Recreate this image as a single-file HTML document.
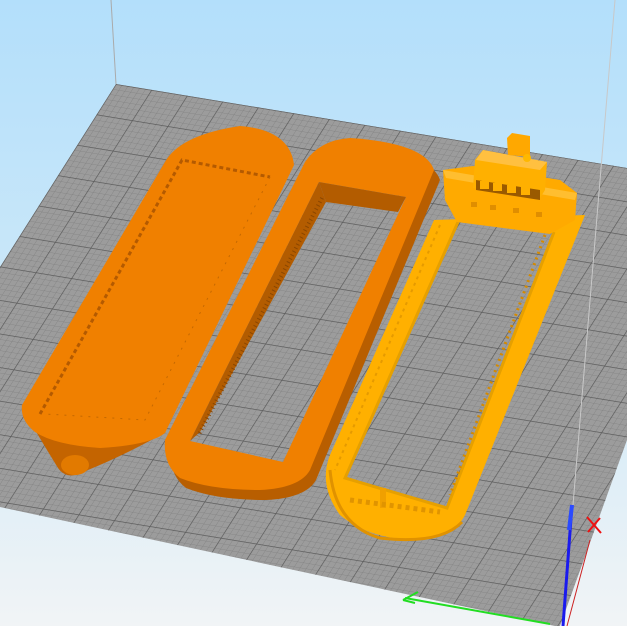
<!DOCTYPE html>
<html><head><meta charset="utf-8"><style>
html,body{margin:0;padding:0;width:627px;height:626px;overflow:hidden}
svg{display:block}
</style></head><body>
<svg width="627" height="626" viewBox="0 0 627 626" xmlns="http://www.w3.org/2000/svg">
<defs>
<linearGradient id="bg" x1="0" y1="0" x2="0" y2="1">
<stop offset="0" stop-color="#b3dffb"/><stop offset="0.55" stop-color="#cfe9f8"/><stop offset="1" stop-color="#f1f4f6"/>
</linearGradient>
<pattern id="minor" width="6" height="6" patternUnits="userSpaceOnUse" patternTransform="matrix(0.987 0.162 -0.535 0.845 116 84)">
<rect width="6" height="6" fill="#9c9c9c"/>
<path d="M0 0H6M0 0V6" stroke="#7e7e7e" stroke-width="0.7" fill="none"/>
</pattern>
<pattern id="major" width="36" height="36" patternUnits="userSpaceOnUse" patternTransform="matrix(0.987 0.162 -0.535 0.845 116 84)">
<path d="M0 0H36M0 0V36" stroke="#5a5a5a" stroke-width="1.4" fill="none"/>
</pattern>
</defs>
<rect width="627" height="626" fill="url(#bg)"/>
<line x1="111" y1="0" x2="116" y2="84" stroke="#aaa" stroke-width="1"/>
<polygon points="116,84 627,168 627,440 560,626 555,626 0,507 0,267" fill="url(#minor)"/>
<polygon points="116,84 627,168 627,440 560,626 555,626 0,507 0,267" fill="url(#major)"/>
<line x1="615" y1="0" x2="573" y2="505" stroke="#c8c8c8" stroke-width="1"/>

<!-- hull 1 -->
<path d="M35,430 Q50,455 58,468 Q68,482 88,470 Q125,455 166,432 Z" fill="#c46400"/>
<ellipse cx="75" cy="465" rx="14" ry="10" fill="#e27a00"/>
<path d="M22,405 L165,162 Q180,135 240,126 Q290,130 294,165 L165,433 Q150,445 100,448 Q55,445 35,432 Q20,420 22,405 Z" fill="#f08000"/>
<path d="M40,414 L182,160 L270,177" stroke="#b45a00" stroke-width="3" fill="none" stroke-dasharray="4 3"/>
<path d="M270,177 L145,420 L45,414" stroke="#c46800" stroke-width="1" fill="none" stroke-dasharray="2 6"/>

<!-- hull 2 -->
<path d="M171,450 L311,172 Q326,150 356,148 Q431,153 440,180 L316,480 Q306,498 266,500 Q216,500 186,488 Q169,475 171,450 Z" fill="#b85e00"/>
<path d="M165,440 L305,162 Q320,140 350,138 Q425,143 434,170 L310,470 Q300,488 260,490 Q210,490 180,478 Q163,465 165,440 Z" fill="#f08000"/>
<polygon points="190,441 319,182 406,197 283,462" fill="url(#minor)"/>
<polygon points="190,441 319,182 406,197 283,462" fill="url(#major)"/>
<polygon points="319,182 406,197 398,212 326,202" fill="#b35c00"/>
<polygon points="319,182 326,202 200,432 190,441" fill="#b35c00"/>
<path d="M322,198 L198,436" stroke="#8a4600" stroke-width="4" stroke-dasharray="1 3" fill="none"/>

<!-- hull 3 -->
<path d="M434,220 L330,455 Q318,485 340,515 Q370,540 420,540 Q455,535 465,515 L585,215 Z" fill="#ffb000"/>
<path d="M330,470 Q335,525 380,538 Q440,545 462,522" stroke="#e09200" stroke-width="3" fill="none"/>
<polygon points="458,222 345,478 447,508 554,232" fill="url(#minor)"/>
<polygon points="458,222 345,478 447,508 554,232" fill="url(#major)"/>
<path d="M458,222 L345,478 L447,508 L554,232" stroke="#e6a000" stroke-width="3" fill="none"/>
<path d="M440,225 L335,470" stroke="#e59a00" stroke-width="2" stroke-dasharray="3 4" fill="none"/>
<path d="M545,235 L450,495" stroke="#d48a00" stroke-width="3" stroke-dasharray="2 4" fill="none"/>
<rect x="380" y="488" width="6" height="20" fill="#f0a000"/>
<path d="M350,500 L440,512" stroke="#e09400" stroke-width="5" stroke-dasharray="4 4" fill="none"/>
<!-- bridge -->
<polygon points="443,170 473,166 560,180 577,193 575,220 550,234 457,222 445,200" fill="#ffaa00"/>
<polygon points="443,170 577,193 575,200 446,178" fill="#ffbe30"/>
<polygon points="475,160 483,150 547,162 545,190 540,198 473,188" fill="#ffb000"/>
<polygon points="483,150 547,162 540,170 476,160" fill="#ffc040"/>
<polygon points="476,180 540,190 540,200 476,190" fill="#9a5a00"/>
<g fill="#ffb000"><rect x="480" y="181" width="9" height="8"/><rect x="493" y="183" width="9" height="8"/><rect x="507" y="185" width="9" height="8"/><rect x="521" y="187" width="9" height="8"/></g>
<g fill="#e08e00"><rect x="471" y="202" width="6" height="5"/><rect x="490" y="205" width="6" height="5"/><rect x="513" y="208" width="6" height="5"/><rect x="536" y="212" width="6" height="5"/></g>
<polygon points="507,138 512,133 530,136 530,157 508,155" fill="#ffa800"/>
<circle cx="527" cy="158" r="4" fill="#ffb800"/>

<!-- axes -->
<path d="M405,598 L550,624" stroke="#22dd22" stroke-width="2"/>
<path d="M403,600 L418,592 M403,600 L415,603" stroke="#22dd22" stroke-width="2"/>
<path d="M572,505 L563,626" stroke="#1a1aee" stroke-width="3"/>
<path d="M572,505 L569,530" stroke="#2a4aff" stroke-width="4"/>
<path d="M590,540 L567,626" stroke="#cc2222" stroke-width="1"/>
<path d="M587,517 L601,533 M600,518 L588,532" stroke="#ee1111" stroke-width="2"/>
</svg>
</body></html>
